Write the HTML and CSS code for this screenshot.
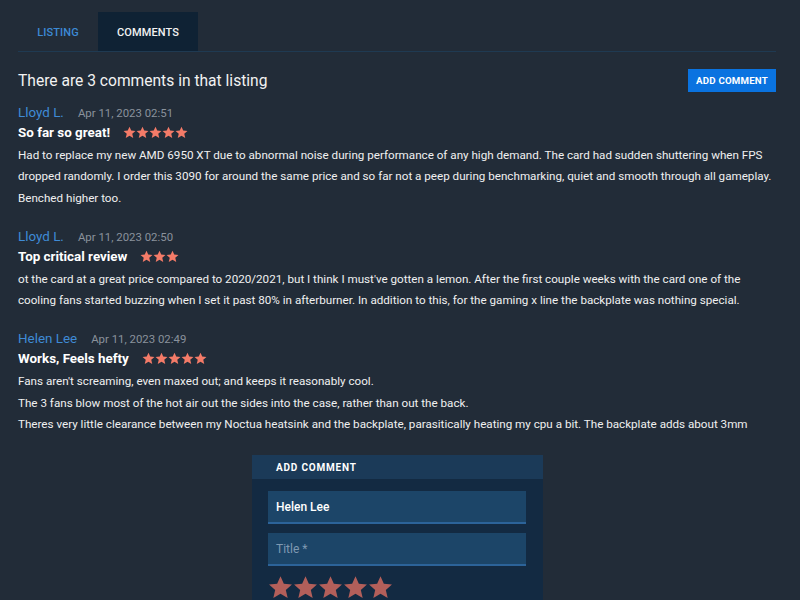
FILE: index.html
```html
<!DOCTYPE html>
<html>
<head>
<meta charset="utf-8">
<link rel="stylesheet" href="styles.css">
</head>
<body>
<svg width="0" height="0" class="defs">
  <defs>
    <symbol id="star" viewBox="0 0 24 24"><path d="M12 1.2l3.2 7.2 7.8.7-5.9 5.2 1.8 7.7L12 18l-6.9 4 1.8-7.7L1 9.1l7.8-.7z"/></symbol>
  </defs>
</svg>
<div class="page">
  <div class="tabs">
    <div class="tab">LISTING</div>
    <div class="tab active">COMMENTS</div>
  </div>
  <div class="head">
    <h1>There are 3 comments in that listing</h1>
    <button class="btn">ADD COMMENT</button>
  </div>

  <div class="comment">
    <div class="meta"><span class="name">Lloyd L.</span><span class="date">Apr 11, 2023 02:51</span></div>
    <div class="title-row"><span class="title">So far so great!</span>
      <span class="stars"><svg><use href="#star"/></svg><svg><use href="#star"/></svg><svg><use href="#star"/></svg><svg><use href="#star"/></svg><svg><use href="#star"/></svg></span></div>
    <p class="body">Had to replace my new AMD 6950 XT due to abnormal noise during performance of any high demand. The card had sudden shuttering when FPS dropped randomly. I order this 3090 for around the same price and so far not a peep during benchmarking, quiet and smooth through all gameplay. Benched higher too.</p>
  </div>

  <div class="comment">
    <div class="meta"><span class="name">Lloyd L.</span><span class="date">Apr 11, 2023 02:50</span></div>
    <div class="title-row"><span class="title">Top critical review</span>
      <span class="stars"><svg><use href="#star"/></svg><svg><use href="#star"/></svg><svg><use href="#star"/></svg></span></div>
    <p class="body">ot the card at a great price compared to 2020/2021, but I think I must've gotten a lemon. After the first couple weeks with the card one of the cooling fans started buzzing when I set it past 80% in afterburner. In addition to this, for the gaming x line the backplate was nothing special.</p>
  </div>

  <div class="comment">
    <div class="meta"><span class="name">Helen Lee</span><span class="date">Apr 11, 2023 02:49</span></div>
    <div class="title-row"><span class="title">Works, Feels hefty</span>
      <span class="stars"><svg><use href="#star"/></svg><svg><use href="#star"/></svg><svg><use href="#star"/></svg><svg><use href="#star"/></svg><svg><use href="#star"/></svg></span></div>
    <p class="body">Fans aren't screaming, even maxed out; and keeps it reasonably cool.<br>The 3 fans blow most of the hot air out the sides into the case, rather than out the back.<br>Theres very little clearance between my Noctua heatsink and the backplate, parasitically heating my cpu a bit. The backplate adds about 3mm</p>
  </div>

  <div class="form">
    <div class="form-head">ADD COMMENT</div>
    <div class="form-body">
      <div class="input filled">Helen Lee</div>
      <div class="input placeholder">Title *</div>
      <div class="big-stars"><svg><use href="#star"/></svg><svg><use href="#star"/></svg><svg><use href="#star"/></svg><svg><use href="#star"/></svg><svg><use href="#star"/></svg></div>
    </div>
  </div>
</div>
</body>
</html>
```
FILE: styles.css
```css
* { box-sizing: border-box; }
html, body { margin: 0; padding: 0; }
body {
  background: #222c38;
  font-family: Roboto, "Liberation Sans", sans-serif;
  color: #f2f2f2;
  height: 600px;
  overflow: hidden;
}
.defs { position: absolute; }
.page { padding: 12px 24px 0 18px; }
.tabs {
  display: flex;
  border-bottom: 1px solid #1f3a52;
  height: 40px;
}
.tab {
  width: 80px;
  display: flex;
  align-items: center;
  justify-content: center;
  padding-top: 1px;
  font-size: 11px;
  font-weight: 500;
  color: #3d8ad6;
  letter-spacing: 0.1px;
}
.tab.active {
  width: 100px;
  background: #0f2234;
  color: #f2f2f2;
}
.head {
  display: flex;
  justify-content: space-between;
  align-items: center;
  margin-top: 17px;
}
h1 {
  margin: 0;
  font-size: 15.6px;
  font-weight: 400;
  color: #f2f2f2;
}
.btn {
  border: 0;
  background: #0a73e0;
  color: #fff;
  font-family: Roboto, sans-serif;
  font-weight: 700;
  font-size: 9.7px;
  height: 23px;
  width: 88px;
  padding: 0;
  letter-spacing: 0.2px;
}
.comment { margin-top: 11px; }
.comment + .comment { margin-top: 18px; }
.meta { display: flex; align-items: baseline; line-height: 20px; height: 20px; }
.name { color: #3f8bd6; font-size: 13.4px; }
.date { color: #8a929c; font-size: 11.4px; margin-left: 14px; }
.title-row { display: flex; align-items: center; height: 19px; }
.title { font-size: 13.4px; font-weight: 700; color: #fff; }
.stars { display: flex; margin-left: 13px; gap: 0; }
.stars svg { width: 13px; height: 13px; fill: #f47b68; }
.body {
  margin: 3px 0 0;
  font-size: 11.65px;
  line-height: 21.3px;
  color: #f0f0f0;
}
.form {
  width: 291px;
  margin: 20px 0 0 234px;
  background: #132a42;
}
.form-head {
  background: #1b3a58;
  height: 24px;
  display: flex;
  align-items: center;
  padding-left: 24px;
  font-size: 10px;
  font-weight: 700;
  letter-spacing: 0.8px;
  color: #fff;
}
.form-body { padding: 12px 17px 0 16px; }
.input {
  height: 33px;
  background: #1c4568;
  border-bottom: 2px solid #2c6399;
  display: flex;
  align-items: center;
  padding-left: 8px;
  font-size: 12px;
  margin-bottom: 9px;
}
.input.filled { color: #fff; font-weight: 500; }
.input.placeholder { color: #7f99b2; }
.big-stars { display: flex; gap: 0; }
.big-stars svg { width: 25px; height: 25px; fill: #b35f5a; }
```
